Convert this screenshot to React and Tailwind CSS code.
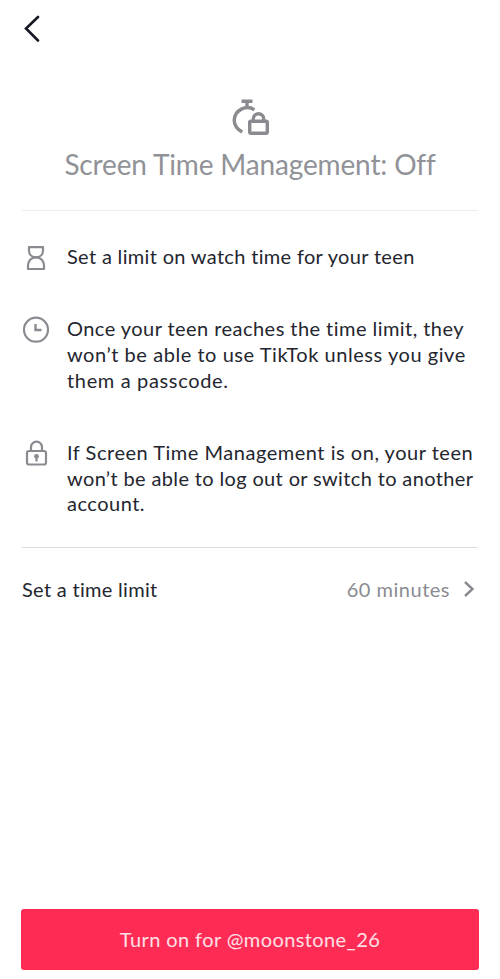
import React from 'react';

const points = [
  { icon: 'hourglass', lines: [{ text: 'Set a limit on watch time for your teen', tracking: 'tracking-[0.33px]' }] },
  {
    icon: 'clock',
    lines: [
      { text: 'Once your teen reaches the time limit, they', tracking: 'tracking-[0.45px]' },
      { text: 'won’t be able to use TikTok unless you give', tracking: 'tracking-[0.55px]' },
      { text: 'them a passcode.', tracking: 'tracking-[0.65px]' },
    ],
  },
  {
    icon: 'lock',
    lines: [
      { text: 'If Screen Time Management is on, your teen', tracking: 'tracking-[0.52px]' },
      { text: 'won’t be able to log out or switch to another', tracking: 'tracking-[0.36px]' },
      { text: 'account.', tracking: 'tracking-[0.5px]' },
    ],
  },
];

function PointIcon({ name }) {
  return (
    <svg className="w-7 h-7 shrink-0 text-[#8a8b91]" viewBox="0 0 28 28" fill="none" stroke="currentColor" strokeWidth="2.2" strokeLinejoin="round">
      {name === 'hourglass' && (
        <>
          <path d="M7 3.200h14v3.300c0 3.700-2.600 6.900-7 6.900s-7-3.200-7-6.900z" />
          <path d="M14 13.400c5 0 8 3.800 8 8.300v3.300H6v-3.300c0-4.500 3-8.300 8-8.300z" />
        </>
      )}
      {name === 'clock' && (
        <>
          <circle cx="14" cy="13.700" r="12" />
          <path d="M13.500 8v6h6" strokeWidth="2.400" strokeLinejoin="miter" />
        </>
      )}
      {name === 'lock' && (
        <>
          <rect x="5" y="11" width="19" height="13.500" rx="2" />
          <path d="M9 11V7.200a5.500 5.500 0 0 1 11 0V11" />
          <circle cx="14.500" cy="16.300" r="2.400" fill="currentColor" stroke="none" />
          <path d="M14.500 16.500v5" />
        </>
      )}
    </svg>
  );
}

function TimerLockIcon() {
  return (
    <svg className="w-10 h-10 text-[#8a8b91]" viewBox="0 0 40 40" fill="none" stroke="currentColor" strokeWidth="3.400">
      <path d="M11.500 3.200h11M17 3.200v6" />
      <path d="M24.400 11.700A13.200 13.200 0 0 0 4.200 22c0 5 3 9.300 8 12" />
      <rect x="19.700" y="23.200" width="17.600" height="12" rx="1.300" />
      <path d="M23.300 23v-2a5.200 5.200 0 0 1 10.400 0v2" />
    </svg>
  );
}

function App() {
  return (
    <div className="w-[500px] h-[979px] bg-white flex flex-col font-['Lato',sans-serif] text-[#24262f] text-xl">
      <header className="h-14 px-[22px] flex items-center text-[#161823]">
        <svg className="w-5 h-7" viewBox="0 0 20 28" fill="none" stroke="currentColor" strokeWidth="2.600" strokeLinecap="round">
          <path d="M16 3L4 14.500l12 12" />
        </svg>
      </header>
      <main className="px-[22px]">
        <div className="mt-[42px] h-[112px] flex flex-col items-center text-[#919298]">
          <TimerLockIcon />
          <h1 className="mt-[5px] text-[28px] leading-[42px] font-normal whitespace-nowrap tracking-[-0.150px]">Screen Time Management: Off</h1>
        </div>
        <ul className="border-t border-b border-t-[#ededee] border-b-[#dcdcde] pt-[33px] pb-[30px] flex flex-col">
          {points.map((point) => (
            <li key={point.icon} className="flex gap-[17px] leading-[25.700px] not-last:mb-[46.600px]">
              <div className="h-[25px]">
                <PointIcon name={point.icon} />
              </div>
              <p>
                {point.lines.map((line) => (
                  <span key={line.text} className={`block whitespace-nowrap ${line.tracking}`}>{line.text}</span>
                ))}
              </p>
            </li>
          ))}
        </ul>
        <div className="mt-[27px] flex items-center">
          <span className="tracking-[0.300px]">Set a time limit</span>
          <span className="ml-auto text-[#8a8b91] tracking-[0.500px]">60 minutes</span>
          <svg className="ml-[13px] mr-[3px] w-3 h-5 text-[#8a8b91]" viewBox="0 0 12 20" fill="none" stroke="currentColor" strokeWidth="2.400">
            <path d="M2 3l7.500 7L2 17" />
          </svg>
        </div>
      </main>
      <button className="mt-auto mb-[9px] mx-[21px] h-[61px] pb-px bg-[#fe2c55] text-white/85 rounded-[3px] tracking-[0.400px]">
        Turn on for @moonstone_26
      </button>
    </div>
  );
}

export default App;
